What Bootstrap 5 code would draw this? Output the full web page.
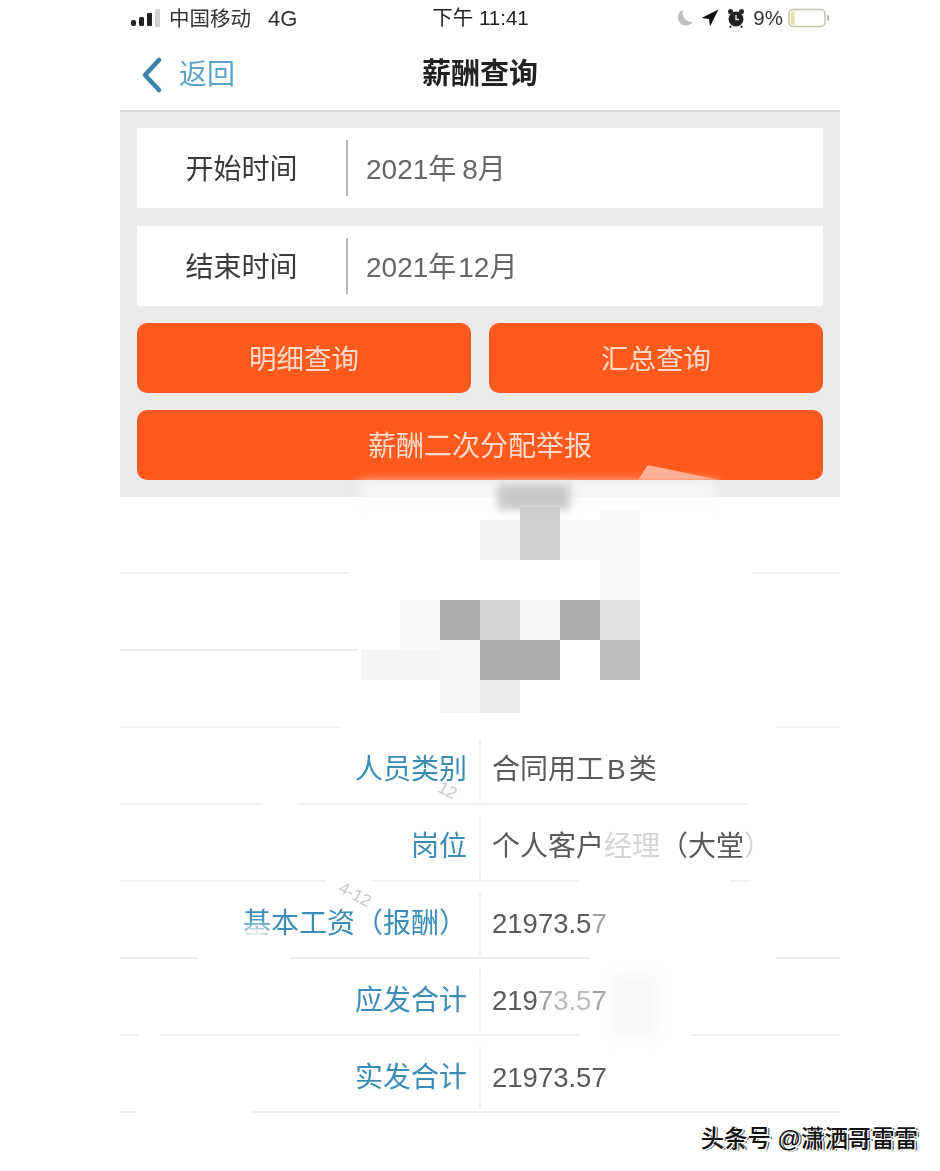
<!DOCTYPE html>
<html lang="zh-CN">
<head>
    <meta charset="UTF-8">
    <title>薪酬查询</title>
    <link href="https://cdn.jsdelivr.net/npm/bootstrap@5.3.0/dist/css/bootstrap.min.css" rel="stylesheet">
    <style>
        html, body { background: #fff; }
        body { font-family: "Liberation Sans", "Noto Sans CJK SC", sans-serif; height: 1171px; overflow: hidden; }
        .phone { width: 720px; margin-left: 120px; position: relative; height: 1171px; }
        .soft { filter: blur(.6px); }

        .status-bar { height: 36px; padding: 0 10px 0 11px; font-size: 20.5px; color: #333; }
        .status-side { width: 300px; }
        .status-time { color: #222; font-size: 20.5px; }
        .net-type { font-size: 22px; margin-left: 17px; }
        .top-nav { height: 74px; padding: 4px 21px 0; position: relative; }
        .back-link { color: #5aa5c6; font-size: 28px; text-decoration: none; gap: 16px; }
        .nav-title { position: absolute; left: 0; right: 0; text-align: center; font-size: 29px; font-weight: 700; color: #222; }

        .query-panel { background: #ebebec; border-top: 2px solid #d9d9d9; padding: 16px 17px 17px; gap: 17px; }
        .field-row { background: #fff; height: 80px; font-size: 28px; padding-top: 3px; }
        .field-next { margin-top: 1px; }
        .field-name { width: 209px; text-align: center; color: #3a3a3a; }
        .field-rule { width: 2px; height: 56px; background: #b8b8b8; margin-top: -3px; }
        .field-value { padding-left: 18px; color: #666; }
        .month-gap { margin-left: 6px; }
        .month-gap-tight { margin-left: 2px; }
        .btn-pay { background: #ff5a1e; border: 0; color: #ffd9c7; border-radius: 10px; font-size: 28px; height: 70px; width: 100%; padding-top: 10px; }
        .btn-pay:hover { background: #ff5a1e; color: #ffd9c7; }
        .btn-half { flex: 1 1 0; font-size: 27.5px; }

        .result-row { height: 77px; border-bottom: 2px solid #efefef; font-size: 28px; padding-top: 9px; }
        .result-name { width: 347px; text-align: right; color: #3b8db5; }
        .result-rule { width: 2px; height: 62px; margin: 0 11px 0 12px; background: #efefef; }
        .result-value { color: #5a5a5a; }
        .num-value { font-size: 27.5px; }
        .latin-gap { margin: 0 3px; }
        .faded { color: #d4d4d4; }
        .mid { color: #bbb; }
        .dim { color: #a0a0a0; }

        .mosaic-cell { position: absolute; width: 40px; height: 40px; }
        .line-gap { position: absolute; height: 6px; background: #fff; }
        .patch-soft { position: absolute; background: #fff; filter: blur(6px); }
        .peach-bite { position: absolute; background: #ffb196; filter: blur(1.500px); clip-path: polygon(0 100%, 12% 0, 100% 100%); }
        .scratch { position: absolute; color: #c9c9c9; font-size: 17px; line-height: 1; transform: rotate(28deg); }
        .watermark { position: absolute; right: -78px; top: 1122px; font-size: 23.4px; color: #111; font-weight: 500; white-space: nowrap; text-shadow: 1.5px 1px 0 #fff, 2.5px 1px 0 #333; }
    </style>
</head>
<body>
<div class="phone">
    <div class="soft">
        <!-- status bar -->
        <div class="status-bar d-flex align-items-center justify-content-between">
            <div class="status-side d-flex align-items-center gap-2">
                <svg width="30" height="20" viewBox="0 0 30 20">
                    <rect x="0" y="12" width="5" height="6" rx="2" fill="#222"/>
                    <rect x="8" y="9" width="5" height="9" rx="1.500" fill="#222"/>
                    <rect x="16" y="5" width="5" height="13" rx="1" fill="#222"/>
                    <rect x="24" y="1" width="5" height="18" rx="1" fill="#cfcfcf"/>
                </svg>
                <span>中国移动<span class="net-type">4G</span></span>
            </div>
            <div class="status-time">下午 11:41</div>
            <div class="status-side d-flex align-items-center justify-content-end gap-2">
                <svg width="18" height="18" viewBox="0 0 18 18"><path d="M8 1a8 8 0 1 0 9.500 12A9.500 9.500 0 0 1 8 1z" fill="#bdbdbd"/></svg>
                <svg width="18" height="18" viewBox="0 0 18 18"><path d="M17.500.5 .5 9l7.500 1 1 7.500z" fill="#111"/></svg>
                <svg width="18" height="20" viewBox="0 0 18 20"><circle cx="9" cy="11" r="7.500" fill="#222"/><circle cx="3.500" cy="3.500" r="2.500" fill="#222"/><circle cx="14.500" cy="3.500" r="2.500" fill="#222"/><path d="M9 7v4.500h3" stroke="#ddd" stroke-width="1.500" fill="none"/><path d="M4 18l-1 1.500M14 18l1 1.500" stroke="#222" stroke-width="2"/></svg>
                <span>9%</span>
                <svg width="42" height="20" viewBox="0 0 42 20" style="margin-left:-3px"><rect x="1" y="1.500" width="36" height="17" rx="4" fill="#fff" stroke="#c4c4a8" stroke-width="1.500"/><rect x="3" y="3.500" width="3.500" height="13" fill="#e4e39a"/><rect x="39" y="7" width="2" height="6" rx="1" fill="#bbb"/></svg>
            </div>
        </div>

        <!-- nav -->
        <div class="top-nav d-flex align-items-center">
            <div class="nav-title">薪酬查询</div>
            <a href="#" class="back-link d-flex align-items-center">
                <svg width="22" height="36" viewBox="0 0 22 36"><path d="M18 3 4 18l14 15" fill="none" stroke="#3a82aa" stroke-width="4.500" stroke-linecap="round" stroke-linejoin="round"/></svg>
                <span>返回</span>
            </a>
        </div>

        <!-- query form -->
        <div class="query-panel d-flex flex-column">
            <div class="field-row d-flex align-items-center">
                <div class="field-name">开始时间</div>
                <div class="field-rule"></div>
                <div class="field-value">2021年<span class="month-gap">8月</span></div>
            </div>
            <div class="field-row field-next d-flex align-items-center">
                <div class="field-name">结束时间</div>
                <div class="field-rule"></div>
                <div class="field-value">2021年<span class="month-gap-tight">12月</span></div>
            </div>
            <div class="d-flex" style="gap:18px">
                <button type="button" class="btn btn-pay btn-half">明细查询</button>
                <button type="button" class="btn btn-pay btn-half">汇总查询</button>
            </div>
            <button type="button" class="btn btn-pay">薪酬二次分配举报</button>
        </div>

        <!-- results -->
        <div>
            <div class="result-row d-flex align-items-center"></div>
            <div class="result-row d-flex align-items-center"></div>
            <div class="result-row d-flex align-items-center"></div>
            <div class="result-row d-flex align-items-center">
                <div class="result-name">人员类别</div><div class="result-rule"></div>
                <div class="result-value">合同用工<span class="latin-gap">B</span>类</div>
            </div>
            <div class="result-row d-flex align-items-center">
                <div class="result-name">岗位</div><div class="result-rule"></div>
                <div class="result-value">个人客户<span class="faded">经理</span>（大堂<span class="faded">）</span></div>
            </div>
            <div class="result-row d-flex align-items-center">
                <div class="result-name">基本工资（报酬）</div><div class="result-rule"></div>
                <div class="result-value num-value">21973.5<span class="dim">7</span></div>
            </div>
            <div class="result-row d-flex align-items-center">
                <div class="result-name">应发合计</div><div class="result-rule"></div>
                <div class="result-value num-value">219<span class="dim">7</span><span class="mid">3.5</span><span class="dim">7</span></div>
            </div>
            <div class="result-row d-flex align-items-center">
                <div class="result-name">实发合计</div><div class="result-rule"></div>
                <div class="result-value num-value">21973.57</div>
            </div>
        </div>
    </div>

    <!-- smudges that break up the row lines -->
    <div class="patch-soft" style="left:240px;top:483px;width:356px;height:16px;background:#f8f8f8"></div>
    <div class="peach-bite" style="left:518px;top:465px;width:82px;height:15px"></div>
    <div class="line-gap" style="left:230px;top:571px;width:403px"></div>
    <div class="line-gap" style="left:238px;top:648px;width:482px"></div>
    <div class="line-gap" style="left:220px;top:725px;width:436px"></div>
    <div class="line-gap" style="left:143px;top:802px;width:34px"></div>
    <div class="line-gap" style="left:628px;top:802px;width:92px"></div>
    <div class="line-gap" style="left:206px;top:879px;width:46px"></div>
    <div class="line-gap" style="left:459px;top:879px;width:151px"></div>
    <div class="line-gap" style="left:631px;top:879px;width:89px"></div>
    <div class="line-gap" style="left:78px;top:956px;width:92px"></div>
    <div class="line-gap" style="left:470px;top:956px;width:186px"></div>
    <div class="line-gap" style="left:18px;top:1033px;width:23px"></div>
    <div class="line-gap" style="left:460px;top:1033px;width:110px"></div>
    <div class="line-gap" style="left:16px;top:1110px;width:115px"></div>
    <!-- erased lower half of the first label glyph -->
    <div class="patch-soft" style="left:124px;top:926px;width:24px;height:18px"></div>
    <div class="patch-soft" style="left:492px;top:975px;width:45px;height:60px;background:#f8f8f8"></div>
    <span class="scratch" style="left:318px;top:782px">12</span>
    <span class="scratch" style="left:218px;top:886px">4-12</span>

    <!-- mosaic over the redacted name -->
    <div class="mosaic-cell" style="left:360px;top:520px;background:#f1f1f1"></div>
    <div class="mosaic-cell" style="left:400px;top:507px;height:53px;background:#cfcfcf"></div>
    <div class="mosaic-cell" style="left:440px;top:520px;background:#f8f8f8"></div>
    <div class="mosaic-cell" style="left:480px;top:510px;height:90px;background:#f9f9f9"></div>
    <div class="mosaic-cell" style="left:280px;top:600px;height:50px;background:#f9f9f9"></div>
    <div class="mosaic-cell" style="left:320px;top:600px;background:#acacac"></div>
    <div class="mosaic-cell" style="left:360px;top:600px;background:#d6d6d6"></div>
    <div class="mosaic-cell" style="left:400px;top:600px;background:#f5f5f5"></div>
    <div class="mosaic-cell" style="left:440px;top:600px;background:#acacac"></div>
    <div class="mosaic-cell" style="left:480px;top:600px;background:#e1e1e1"></div>
    <div class="mosaic-cell" style="left:241px;top:650px;width:79px;height:30px;background:#f4f4f4"></div>
    <div class="mosaic-cell" style="left:320px;top:640px;height:73px;background:#f5f5f5"></div>
    <div class="mosaic-cell" style="left:360px;top:640px;width:80px;background:#acacac"></div>
    <div class="mosaic-cell" style="left:480px;top:640px;background:#bdbdbd"></div>
    <div class="mosaic-cell" style="left:360px;top:680px;height:33px;background:#ebebeb"></div>
    <div class="mosaic-cell" style="left:378px;top:484px;width:72px;height:26px;background:#c8c8c8;filter:blur(4px)"></div>

    <div class="watermark">头条号 @潇洒哥雷雷</div>
</div>
<script src="https://cdn.jsdelivr.net/npm/bootstrap@5.3.0/dist/js/bootstrap.bundle.min.js"></script>
</body>
</html>
